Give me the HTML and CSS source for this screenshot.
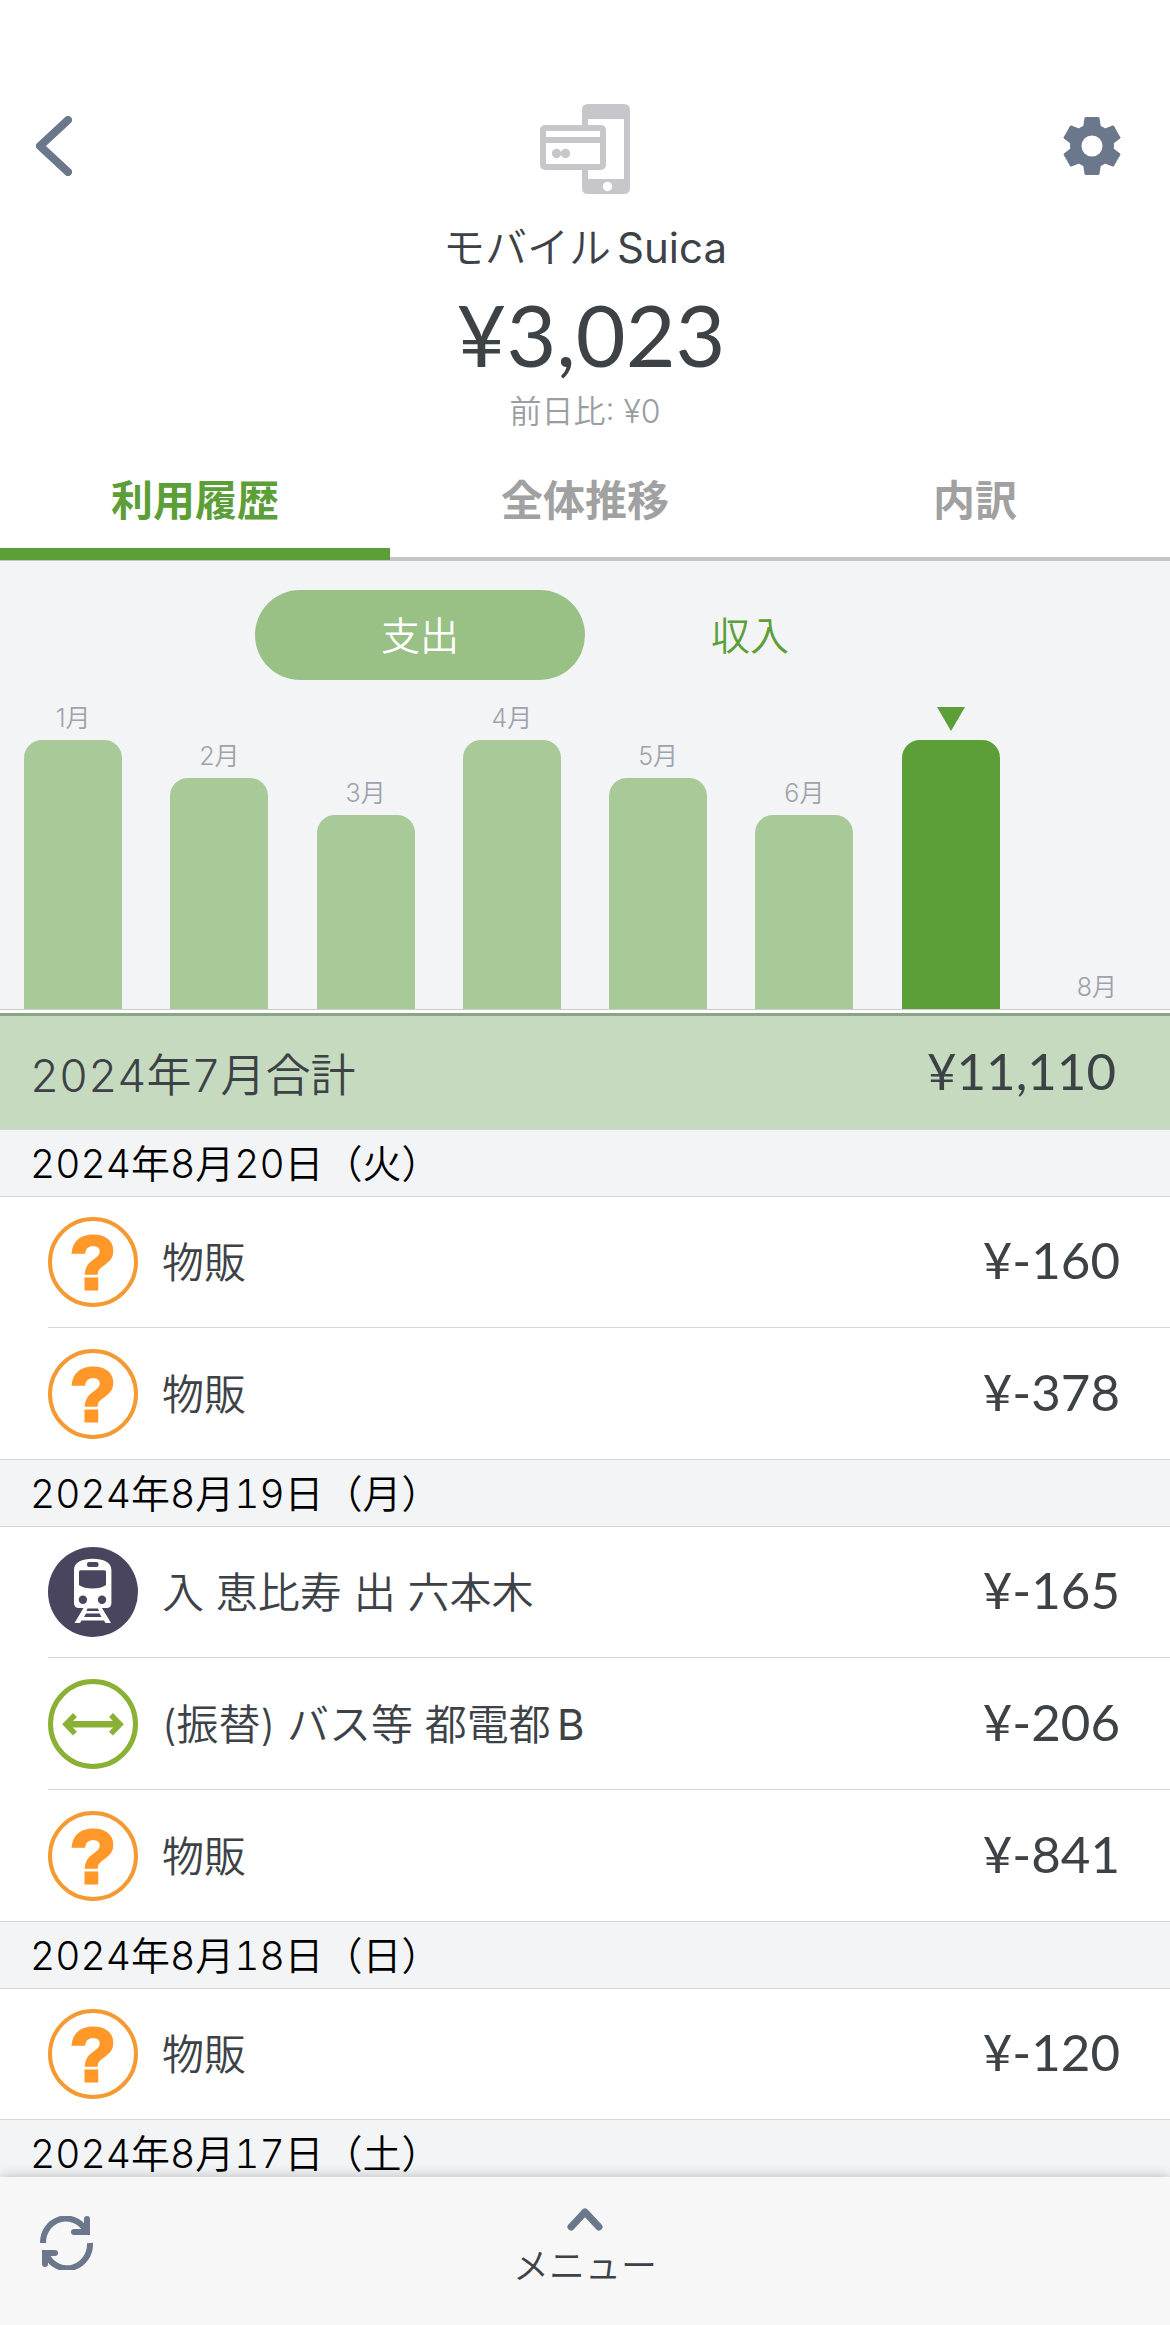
FILE: index.html
```html
<!DOCTYPE html>
<html lang="ja">
<head>
<meta charset="utf-8">
<meta name="viewport" content="width=device-width, initial-scale=1">
<title>モバイルSuica</title>
<link rel="stylesheet" href="styles.css">
</head>
<body>
<div class="app">
  <header class="top">
    <button class="icon-button" type="button" aria-label="戻る">
      <svg width="36" height="60" viewBox="0 0 36 60"><path d="M32 4L4 30L32 56" fill="none" stroke="#6b788b" stroke-width="8" stroke-linecap="round" stroke-linejoin="round"/></svg>
    </button>
    <div class="account">
      <svg width="90" height="90" viewBox="0 0 90 90" aria-hidden="true">
        <path fill="#c7c7cb" fill-rule="evenodd" d="M48 0H84Q90 0 90 6V84Q90 90 84 90H48Q42 90 42 84V6Q42 0 48 0ZM48 15V75H84V15Z"/>
        <circle cx="67.500" cy="82.500" r="4.700" fill="#fff"/>
        <rect y="21" width="66" height="45" rx="5" fill="#c7c7cb"/>
        <path fill="#fff" d="M6 27H60V33H6ZM6 39H60V60H6Z"/>
        <path fill="#c7c7cb" d="M16 48H26V51H16Z"/>
        <circle cx="16.500" cy="49.500" r="4.700" fill="#c7c7cb"/><circle cx="25.500" cy="49.500" r="4.700" fill="#c7c7cb"/>
      </svg>
      <h1 class="account-name">モバイル<span class="latin">Suica</span></h1>
      <p class="balance">¥3,023</p>
      <p class="change">前日比: ¥0</p>
    </div>
    <button class="icon-button icon-button-end" type="button" aria-label="設定">
      <svg width="60" height="60" viewBox="-30 -30 60 60">
        <defs><path id="tooth" d="M-6.500-29H6.500L7.500-28L9-18H-9L-7.500-28Z"/></defs>
        <g fill="#6b788b">
          <use href="#tooth"/><use href="#tooth" transform="rotate(60)"/><use href="#tooth" transform="rotate(120)"/>
          <use href="#tooth" transform="rotate(180)"/><use href="#tooth" transform="rotate(240)"/><use href="#tooth" transform="rotate(300)"/>
          <circle r="22"/>
        </g>
        <circle r="10.500" fill="#fff"/>
      </svg>
    </button>
  </header>

  <nav class="tabs">
    <a class="tab tab-active" href="#history" aria-current="page">利用履歴</a>
    <a class="tab" href="#trend">全体推移</a>
    <a class="tab" href="#breakdown">内訳</a>
  </nav>

  <section class="summary-chart">
    <div class="segment">
      <button class="segment-button segment-on" type="button">支出</button>
      <button class="segment-button" type="button">収入</button>
    </div>
    <div class="chart">
      <div class="month"><span>1月</span><div class="bar" style="height:269px"></div></div>
      <div class="month"><span>2月</span><div class="bar" style="height:231px"></div></div>
      <div class="month"><span>3月</span><div class="bar" style="height:194px"></div></div>
      <div class="month"><span>4月</span><div class="bar" style="height:269px"></div></div>
      <div class="month"><span>5月</span><div class="bar" style="height:231px"></div></div>
      <div class="month"><span>6月</span><div class="bar" style="height:194px"></div></div>
      <div class="month"><svg class="marker" width="28" height="24" viewBox="0 0 28 24" role="img" aria-label="7月"><path d="M0 0H28L14 24Z" fill="#5c9e37"/></svg><div class="bar bar-current" style="height:269px"></div></div>
      <div class="month"><span>8月</span><div class="bar" style="height:0px"></div></div>
    </div>
  </section>

  <div class="total"><h2 class="total-label">2024年7月合計</h2><span class="amount">¥11,110</span></div>

  <main class="history" id="history">
    <h3 class="date">2024年8月20日（火）</h3>
    <ul class="entries">
      <li class="entry"><span class="entry-icon unknown">?</span><span class="entry-name">物販</span><span class="amount">¥-160</span></li>
      <li class="entry"><span class="entry-icon unknown">?</span><span class="entry-name">物販</span><span class="amount">¥-378</span></li>
    </ul>
    <h3 class="date">2024年8月19日（月）</h3>
    <ul class="entries">
      <li class="entry">
        <svg class="entry-icon" viewBox="0 0 90 90" aria-hidden="true">
          <circle cx="45" cy="45" r="45" fill="#4a455f"/>
          <path fill="#fff" d="M26 23C26 15 34 11.700 44.700 11.700S63.400 15 63.400 23V56Q63.400 61 58.400 61H54L63 76H57.500L56 73.500H33.500L32 76H26.500L35.500 61H31Q26 61 26 56Z"/>
          <rect x="39" y="15" width="11.500" height="5" rx="2" fill="#4a455f"/>
          <path fill="#4a455f" d="M32.500 23.300H56.500Q58 23.300 58 25V38Q53 41.500 44.500 41.500T31 38V25Q31 23.300 32.500 23.300ZM39.500 61.500H50L51 64H38.500ZM38 66.500H51.500L53.500 70H36Z"/>
          <circle cx="34.900" cy="52.700" r="4.200" fill="#4a455f"/>
          <circle cx="54" cy="52.700" r="4.200" fill="#4a455f"/>
        </svg>
        <span class="entry-name">入 恵比寿 出 六本木</span><span class="amount">¥-165</span>
      </li>
      <li class="entry">
        <svg class="entry-icon" viewBox="0 0 90 90" aria-hidden="true">
          <circle cx="45" cy="45" r="42.500" fill="#fff" stroke="#8ab135" stroke-width="5"/>
          <path fill="none" stroke="#8ab135" stroke-width="6.500" d="M20 45.300H70"/>
          <path fill="none" stroke="#8ab135" stroke-width="5.500" d="M27 36L18 45.300L27 54.600M63 36L72 45.300L63 54.600"/>
        </svg>
        <span class="entry-name">(振替) バス等 都電都<span class="latin">B</span></span><span class="amount">¥-206</span>
      </li>
      <li class="entry"><span class="entry-icon unknown">?</span><span class="entry-name">物販</span><span class="amount">¥-841</span></li>
    </ul>
    <h3 class="date">2024年8月18日（日）</h3>
    <ul class="entries">
      <li class="entry"><span class="entry-icon unknown">?</span><span class="entry-name">物販</span><span class="amount">¥-120</span></li>
    </ul>
    <h3 class="date">2024年8月17日（土）</h3>
  </main>

  <footer class="toolbar">
    <button class="icon-button" type="button" aria-label="更新">
      <svg width="54" height="54" viewBox="0 0 54 54" fill="none" stroke="#6b788b" stroke-width="6">
        <path d="M4 27A23 24 0 0 1 46 13M51 27A23 24 0 0 1 8 40"/>
        <path stroke-linecap="round" d="M48 3V16H35M6 48V37H16"/>
      </svg>
    </button>
    <button class="menu-button" type="button">
      <svg width="36" height="24" viewBox="0 0 36 24" aria-hidden="true"><path d="M4 20L18 5L32 20" fill="none" stroke="#6b788b" stroke-width="7" stroke-linecap="round" stroke-linejoin="round"/></svg>
      <span>メニュー</span>
    </button>
  </footer>
</div>
</body>
</html>
```

FILE: styles.css
```css
* {
  box-sizing: border-box;
}

body {
  margin: 0;
  background: #fff;
  color: #3d4247;
  font-family: "Inter", "Noto Sans CJK JP", sans-serif;
  font-weight: 350;
}

h1, h2, h3, p, ul {
  margin: 0;
  padding: 0;
  font-weight: inherit;
}

button {
  padding: 0;
  border: 0;
  background: none;
  color: inherit;
  font: inherit;
}

svg {
  display: block;
}

.latin {
  margin-left: 6px;
  font-weight: 400;
}

.app {
  display: flex;
  flex-direction: column;
  height: 100vh;
}

.top {
  display: grid;
  grid-template-columns: 1fr auto 1fr;
  align-items: start;
  flex: none;
  padding: 104px 36px 12px;
}

.icon-button {
  display: flex;
  align-items: center;
  justify-self: start;
  height: 84px;
}

.icon-button-end {
  justify-self: end;
  margin-right: 12px;
}

.account {
  display: flex;
  flex-direction: column;
  align-items: center;
}

.account-name {
  margin-top: 30px;
  font-size: 42px;
  line-height: 48px;
}

.balance {
  margin-top: 20px;
  padding-left: 12px;
  font: 400 86px/84px "Lato", sans-serif;
}

.change {
  margin-top: 20px;
  color: #999ea4;
  font-size: 32px;
  line-height: 32px;
}

.tabs {
  display: flex;
  flex: none;
  height: 121px;
  border-bottom: 4px solid #c6c6c6;
}

.tab {
  flex: 1;
  height: 120px;
  padding-top: 31px;
  color: #a1a1a1;
  font-size: 42px;
  font-weight: 700;
  line-height: 60px;
  text-align: center;
  text-decoration: none;
}

.tab-active {
  border-bottom: 12px solid #5c9e37;
  color: #5c9e37;
}

.summary-chart {
  flex: none;
  padding-top: 29px;
  border-bottom: 3px solid #fff;
  background: #f2f4f6;
}

.segment {
  display: flex;
  justify-content: center;
}

.segment-button {
  width: 330px;
  height: 90px;
  padding-bottom: 4px;
  border-radius: 45px;
  color: #5c9e37;
  font-size: 39px;
}

.segment-on {
  background: #99c085;
  color: #fff;
}

.chart {
  display: flex;
  align-items: flex-end;
  height: 330px;
  border-bottom: 1px solid #c9cbcd;
}

.month {
  display: flex;
  flex: 1;
  flex-direction: column;
  align-items: center;
  gap: 7px;
  color: #9ea2aa;
  font-size: 25px;
  line-height: 30px;
}

.marker {
  margin-bottom: 2px;
}

.bar {
  width: 67%;
  border-radius: 18px 18px 0 0;
  background: #a8ca98;
}

.bar-current {
  background: #5c9e37;
}

.total {
  display: flex;
  align-items: center;
  justify-content: space-between;
  flex: none;
  height: 116px;
  padding: 0 54px 0 30px;
  border-top: 3px solid #8ba387;
  background: #c6dabf;
}

.total-label {
  font-size: 45px;
  font-variant-numeric: tabular-nums;
}

.amount {
  padding-bottom: 4px;
  font: 400 51px/60px "Lato", sans-serif;
}

.history {
  flex: 1;
  min-height: 0;
  overflow: hidden;
}

.date {
  height: 68px;
  padding-left: 30px;
  border: 1px solid #d2d5d7;
  border-width: 1px 0;
  background: #f2f4f6;
  color: #000;
  font-size: 39px;
  font-variant-numeric: tabular-nums;
  line-height: 67px;
}

.entries {
  padding-left: 48px;
  list-style: none;
}

.entry {
  display: flex;
  align-items: center;
  gap: 24px;
  padding: 20px 50px 20px 0;
}

.entry + .entry {
  padding-top: 21px;
  border-top: 1px solid #d2d5d7;
}

.entry-icon {
  width: 90px;
  height: 90px;
}

.unknown {
  border: 4px solid #f59a32;
  border-radius: 50%;
  color: #ff9829;
  font: 700 76px/84px "Liberation Sans", sans-serif;
  text-align: center;
  -webkit-text-stroke: 3px #ff9829;
}

.entry-name {
  flex: 1;
  padding-top: 2px;
  font-size: 42px;
  line-height: 60px;
}

.toolbar {
  display: grid;
  grid-template-columns: 1fr auto 1fr;
  align-items: start;
  flex: none;
  height: 148px;
  padding: 24px 39px 0;
  background: #f7f7f7;
  box-shadow: 0 0 12px rgba(0, 0, 0, 0.25);
  z-index: 1;
}

.menu-button {
  display: flex;
  flex-direction: column;
  align-items: center;
  gap: 14px;
  padding-top: 6px;
  font-size: 36px;
  line-height: 42px;
}
```
